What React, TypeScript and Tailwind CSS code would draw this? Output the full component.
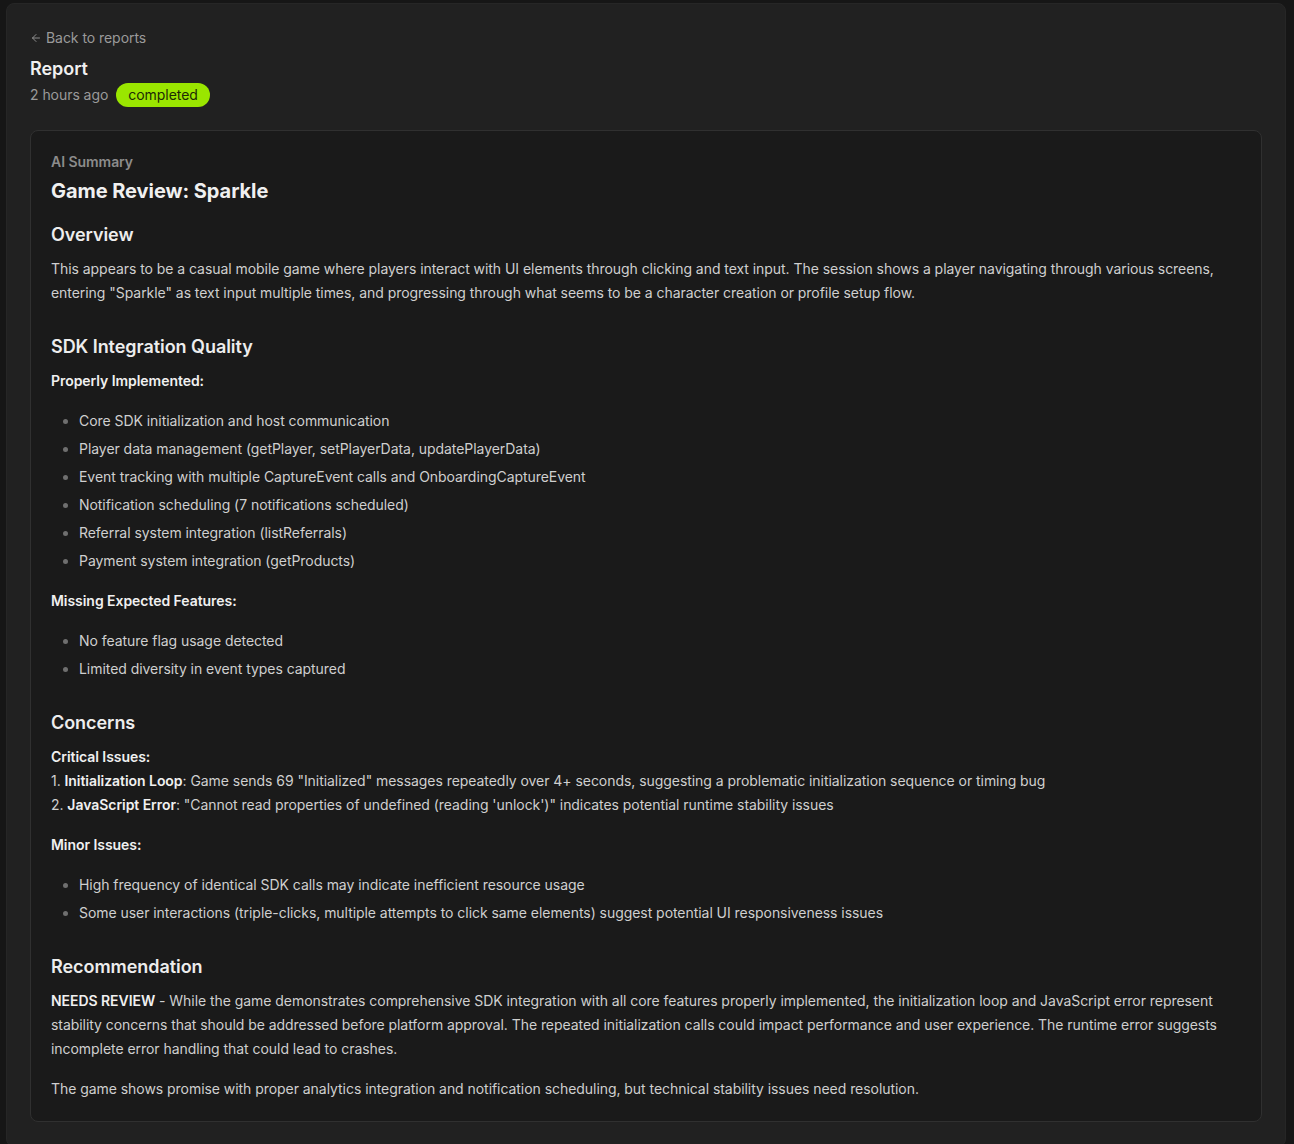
import { ArrowLeft } from "lucide-react";

const implemented = [
  "Core SDK initialization and host communication",
  "Player data management (getPlayer, setPlayerData, updatePlayerData)",
  "Event tracking with multiple CaptureEvent calls and OnboardingCaptureEvent",
  "Notification scheduling (7 notifications scheduled)",
  "Referral system integration (listReferrals)",
  "Payment system integration (getProducts)",
];

const missing = ["No feature flag usage detected", "Limited diversity in event types captured"];

const minor = [
  "High frequency of identical SDK calls may indicate inefficient resource usage",
  "Some user interactions (triple-clicks, multiple attempts to click same elements) suggest potential UI responsiveness issues",
];

function Bullets({ items }: { items: string[] }) {
  return (
    <ul className="list-disc pl-7 my-4 space-y-1 marker:text-[#6f6f6f]">
      {items.map((item) => (
        <li key={item} className="text-sm leading-6 text-[#cfcfcf]">
          {item}
        </li>
      ))}
    </ul>
  );
}

function SectionTitle({ children }: { children: React.ReactNode }) {
  return <h2 className="text-lg leading-7 font-semibold text-[#ededed] mt-7 mb-2">{children}</h2>;
}

export default function App() {
  return (
    <div
      className="min-h-screen bg-[#161616] pt-[3px] pl-[6px] pr-[8px] tracking-[-0.05px]"
      style={{ fontFamily: "Inter, 'Noto Sans', sans-serif" }}
    >
      <div className="rounded-lg border border-[#262626] bg-[#212121] px-[23px] pt-6 pb-6">
        <a href="#" className="flex items-center gap-1 text-sm leading-5 text-[#9a9a9a]">
          <ArrowLeft size={12} strokeWidth={1.75} />
          Back to reports
        </a>
        <h1 className="mt-[7px] text-lg leading-7 font-semibold text-[#f0f0f0]">Report</h1>
        <div className="flex items-center gap-2">
          <span className="text-sm leading-5 text-[#9a9a9a]">2 hours ago</span>
          <span className="rounded-full bg-[#9ae600] px-3 text-sm leading-6 text-[#1d2a05]">completed</span>
        </div>

        <div className="mt-[23px] rounded-lg border border-[#303030] bg-[#1a1a1a] px-5 pt-[21px] pb-5">
          <div className="text-sm leading-5 font-semibold text-[#8c8c8c]">AI Summary</div>
          <h1 className="mt-[5px] text-xl leading-7 font-bold text-[#f0f0f0]">Game Review: Sparkle</h1>

          <h2 className="text-lg leading-7 font-semibold text-[#ededed] mt-4 mb-2">Overview</h2>
          <p className="text-sm leading-6 text-[#cfcfcf]">
            This appears to be a casual mobile game where players interact with UI elements through clicking and text
            input. The session shows a player navigating through various screens, entering "Sparkle" as text input
            multiple times, and progressing through what seems to be a character creation or profile setup flow.
          </p>

          <SectionTitle>SDK Integration Quality</SectionTitle>
          <p className="text-sm leading-6 font-semibold text-[#f0f0f0]">Properly Implemented:</p>
          <Bullets items={implemented} />
          <p className="text-sm leading-6 font-semibold text-[#f0f0f0]">Missing Expected Features:</p>
          <Bullets items={missing} />

          <SectionTitle>Concerns</SectionTitle>
          <p className="text-sm leading-6 text-[#cfcfcf]">
            <strong className="font-semibold text-[#f0f0f0]">Critical Issues:</strong>
            <br />
            1. <strong className="font-semibold text-[#f0f0f0]">Initialization Loop</strong>: Game sends 69
            "Initialized" messages repeatedly over 4+ seconds, suggesting a problematic initialization sequence or
            timing bug
            <br />
            2. <strong className="font-semibold text-[#f0f0f0]">JavaScript Error</strong>: "Cannot read properties of
            undefined (reading 'unlock')" indicates potential runtime stability issues
          </p>
          <p className="mt-4 text-sm leading-6 font-semibold text-[#f0f0f0]">Minor Issues:</p>
          <Bullets items={minor} />

          <SectionTitle>Recommendation</SectionTitle>
          <p className="text-sm leading-6 text-[#cfcfcf]">
            <strong className="font-semibold text-[#f0f0f0]">NEEDS REVIEW</strong> - While the game demonstrates
            comprehensive SDK integration with all core features properly implemented, the initialization loop and
            JavaScript error represent stability concerns that should be addressed before platform approval. The
            repeated initialization calls could impact performance and user experience. The runtime error suggests
            incomplete error handling that could lead to crashes.
          </p>
          <p className="mt-4 text-sm leading-6 text-[#cfcfcf]">
            The game shows promise with proper analytics integration and notification scheduling, but technical
            stability issues need resolution.
          </p>
        </div>
      </div>
    </div>
  );
}
